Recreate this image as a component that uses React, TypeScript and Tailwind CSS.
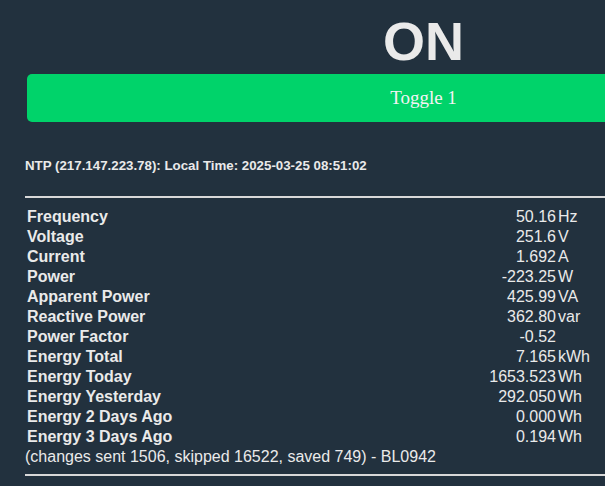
import React from "react";

const rows: [string, string, string][] = [
  ["Frequency", "50.16", "Hz"],
  ["Voltage", "251.6", "V"],
  ["Current", "1.692", "A"],
  ["Power", "-223.25", "W"],
  ["Apparent Power", "425.99", "VA"],
  ["Reactive Power", "362.80", "var"],
  ["Power Factor", "-0.52", ""],
  ["Energy Total", "7.165", "kWh"],
  ["Energy Today", "1653.523", "Wh"],
  ["Energy Yesterday", "292.050", "Wh"],
  ["Energy 2 Days Ago", "0.000", "Wh"],
  ["Energy 3 Days Ago", "0.194", "Wh"],
];

export default function App() {
  return (
    <div className="w-full min-h-screen h-[486px] overflow-hidden bg-[#22313e] text-[#eaeaea] font-['Liberation_Sans',Arial,sans-serif]">
      <div className="ml-[25px] w-[797px]">
        <div className="pt-[14px] text-center font-bold text-[54px] leading-[54px]">ON</div>
        <button className="block mt-[6px] mx-[2px] w-[793px] h-[48px] rounded-[5px] bg-[#00d36a] text-[#f4f4f4] font-['Liberation_Serif','Times_New_Roman',serif] text-[19px] leading-[48px]">
          Toggle 1
        </button>
        <div className="mt-[36px] text-[13.3px] leading-[15px] font-bold">
          NTP (217.147.223.78): Local Time: 2025-03-25 08:51:02
        </div>
        <div className="mt-[23px] h-[2px] bg-[#d8d8d8]" />
        <div className="mt-[9px] text-[16px] leading-[20px]">
          {rows.map(([label, value, unit]) => (
            <div key={label} className="grid grid-cols-[463px_68px_auto]">
              <div className="pl-[2px] font-bold whitespace-nowrap">{label}</div>
              <div className="text-right whitespace-nowrap">{value}</div>
              <div className="pl-[2px] whitespace-nowrap">{unit}</div>
            </div>
          ))}
          <div className="whitespace-nowrap">(changes sent 1506, skipped 16522, saved 749) - BL0942</div>
        </div>
        <div className="mt-[7px] h-[2px] bg-[#d8d8d8]" />
      </div>
    </div>
  );
}
